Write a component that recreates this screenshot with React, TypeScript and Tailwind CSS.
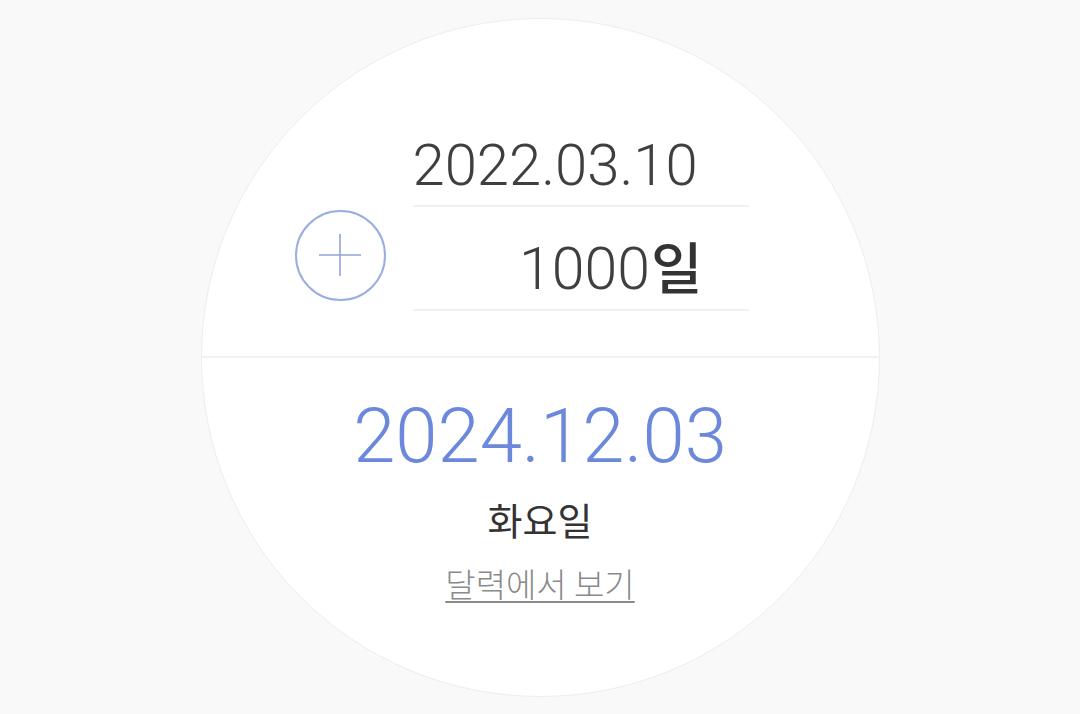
export default function App() {
  return (
    <div className="flex h-[714px] w-full items-center justify-center bg-[#f9f9f9] font-['Roboto','Noto_Sans_CJK_KR',sans-serif]">
      <div className="flex h-[679px] w-[679px] flex-col overflow-hidden rounded-full border border-[#ededed] bg-white">
        {/* input half */}
        <div className="flex h-[337px] shrink-0 items-end justify-start pb-[45px] pl-[93px]">
          <button className="mb-[10px] flex h-[91px] w-[91px] items-center justify-center rounded-full border-2 border-[#9aaee0]">
            <svg width="46" height="46" viewBox="0 0 46 46" fill="none">
              <path d="M23 2v42M2 23h42" stroke="#8ea4dc" strokeWidth="1.6" />
            </svg>
          </button>
          <div className="ml-[27px] flex w-[336px] flex-col">
            <div className="border-b-2 border-[#f0f0f0] pb-[11px] text-[58px] font-light leading-[58px] text-[#3f3f3f]">
              2022.03.10
            </div>
            <div className="flex items-baseline justify-end border-b-2 border-[#f0f0f0] pr-[46px] pt-[29px] pb-[11px] text-[58px] font-light leading-[58px] text-[#3f3f3f]">
              <span className="text-[59px]">1000</span>
              <span className="ml-[1px] font-['Noto_Sans_CJK_KR',sans-serif] text-[56px] font-medium text-[#333]">일</span>
            </div>
          </div>
        </div>
        <div className="h-[2px] w-full shrink-0 bg-[#f1f1f1]" />
        {/* result half */}
        <div className="flex flex-col items-center pt-[40px]">
          <div className="text-[76px] font-light leading-[76px] text-[#6c88da]">2024.12.03</div>
          <div className="mt-[27px] font-['Noto_Sans_CJK_KR',sans-serif] text-[38px] font-normal leading-[36px] text-[#333]">
            화요일
          </div>
          <a
            href="#"
            className="mt-[30px] font-['Noto_Sans_CJK_KR',sans-serif] text-[33px] font-light leading-[32px] text-[#8a8a8a] underline decoration-[1.5px] underline-offset-[4px]"
          >
            달력에서 보기
          </a>
        </div>
      </div>
    </div>
  );
}
